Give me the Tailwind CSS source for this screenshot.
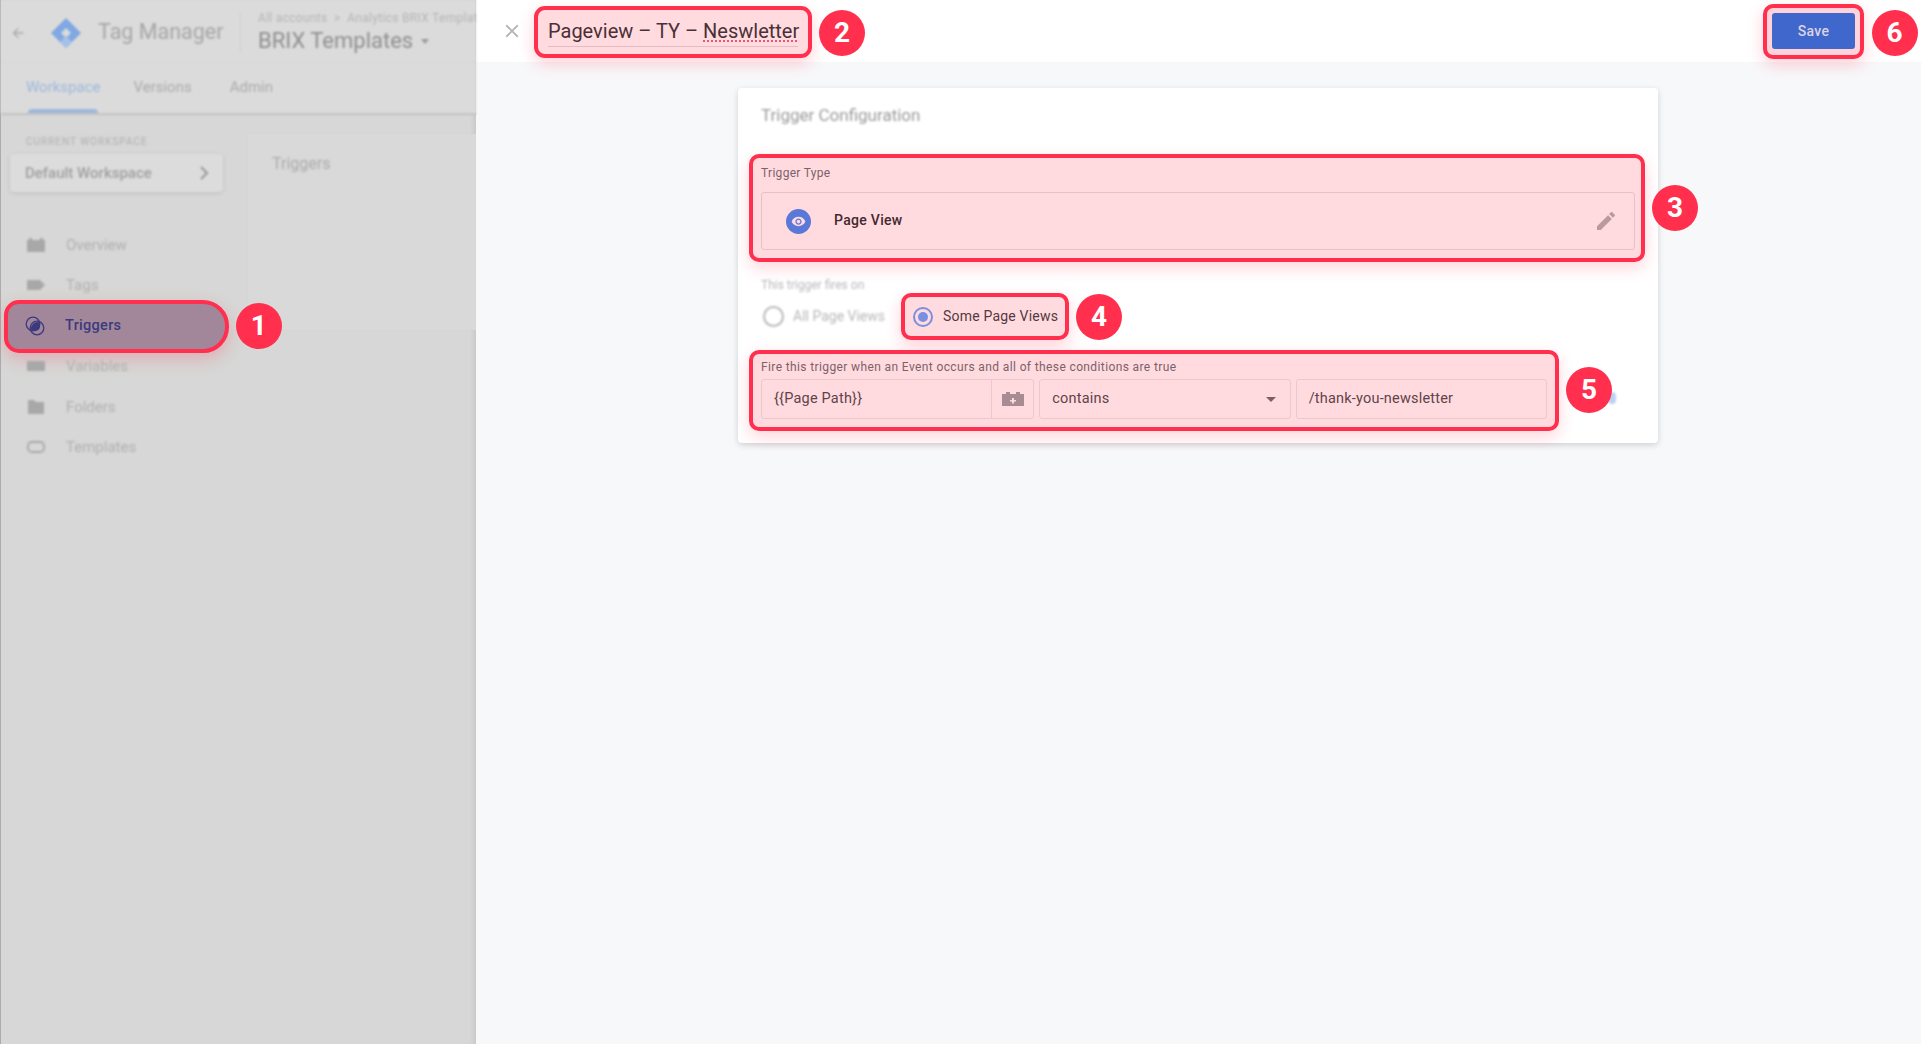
<!DOCTYPE html>
<html lang="en">
<head>
    <meta charset="UTF-8">
    <title>Trigger Configuration</title>
    <script src="https://cdn.jsdelivr.net/npm/@tailwindcss/browser@4"></script>
</head>
<body class="h-[1044px] w-[1921px] overflow-hidden bg-[#f7f8fa] font-['Roboto',sans-serif]">
<div class="flex h-full">
    <!-- Dimmed sidebar -->
    <aside class="relative flex h-full w-[476px] shrink-0 flex-col border-l border-[#ababab] bg-[#d6d7d6] shadow-[inset_-5px_0_5px_-3px_rgba(0,0,0,0.08)]">
        <!-- Top bar -->
        <div class="flex h-[62px] shrink-0 items-center overflow-hidden bg-[#dbdbdb] pt-[3px] blur-[1.2px]">
            <svg class="ml-[9px] w-[16px] shrink-0" viewBox="0 0 24 24" fill="#a9a9a9"><path d="M20 11H7.83l5.59-5.59L12 4l-8 8 8 8 1.41-1.41L7.83 13H20v-2z"/></svg>
            <svg class="ml-[24px] w-[32px] shrink-0" viewBox="0 0 32 32"><path d="M16 1 L31 16 L16 31 L1 16Z" fill="#7fa8e4"/><path d="M16 11 L21 16 L16 21 L11 16Z" fill="#dbdbdb"/><path d="M16 31 L10 25 L16 19 L22 25Z" fill="#a7c0e6"/></svg>
            <span class="ml-[16px] w-[125px] shrink-0 whitespace-nowrap text-[21.5px] text-[#a6a6a6]">Tag Manager</span>
            <div class="ml-[17px] h-[40px] w-px shrink-0 bg-[#d0d0d0]"></div>
            <div class="ml-[17px] flex shrink-0 flex-col">
                <span class="whitespace-nowrap text-[12px] leading-[14px] tracking-[0.3px] text-[#b5b5b5]">All accounts &nbsp;&gt;&nbsp; Analytics BRIX Templat</span>
                <span class="mt-[2px] flex items-center text-[22px] leading-[28px] text-[#8f8f8f]">BRIX Templates<span class="ml-[8px] mt-[2px] border-x-[4px] border-t-[5px] border-x-transparent border-t-[#9a9a9a]"></span></span>
            </div>
        </div>
        <!-- Tabs -->
        <div class="relative flex h-[53px] shrink-0 items-center gap-[34px] border-b-2 border-[#c2c3c2] bg-[#dbdbdb] pb-[1px] pl-[25px] text-[15px] text-[#ababab] blur-[1.2px]">
            <span class="text-[#9db8dd]">Workspace</span>
            <span class="ml-[-1px]">Versions</span>
            <span class="ml-[4px]">Admin</span>
            <div class="absolute bottom-0 left-[27px] h-[4px] w-[70px] rounded-t bg-[#9db8dd]"></div>
        </div>
        <div class="flex min-h-0 flex-1">
            <div class="w-[247px] shrink-0">
                <div class="ml-[25px] mt-[21px] text-[10px] leading-[12px] tracking-[1px] text-[#b0b0b0] blur-[1px]">CURRENT WORKSPACE</div>
                <div class="ml-[9px] mt-[6px] flex h-[38px] w-[213px] items-center justify-between rounded bg-[#dcdcdc] pl-[15px] pr-[13px] text-[15px] font-medium text-[#a0a0a0] shadow-[0_1px_4px_rgba(0,0,0,0.12)] blur-[1px]">
                    <span>Default Workspace</span>
                    <svg class="w-[12px]" viewBox="0 0 12 16" fill="none" stroke="#999" stroke-width="2"><path d="M3 2l6 6-6 6"/></svg>
                </div>
                <nav class="mt-[32.5px] flex flex-col text-[15px] text-[#b0b0b0]">
                    <div class="flex h-[40.5px] items-center pl-[25px] blur-[1.2px]">
                        <svg class="w-[20px]" viewBox="0 0 20 20" fill="#a8a8a8"><path d="M1 5h18v12H1zM3 3h3v2H3zM14 3h3v2h-3z"/></svg>
                        <span class="ml-[20px]">Overview</span>
                    </div>
                    <div class="flex h-[40.5px] items-center pl-[25px] blur-[1.2px]">
                        <svg class="w-[20px]" viewBox="0 0 20 20" fill="#a8a8a8"><path d="M1 5h13l5 5-5 5H1z"/></svg>
                        <span class="ml-[20px]">Tags</span>
                    </div>
                    <!-- Highlighted row -->
                    <div class="relative flex h-[40.5px] items-center pl-[24px] text-[14.5px] font-medium tracking-[0.3px] text-[#3c3a7e]">
                        <div class="absolute left-[3px] top-[-6px] h-[53px] w-[225px] rounded-l-[15px] rounded-r-[26px] border-[4px] border-[#ff2f4d] bg-[#a2879a] shadow-[0_6px_16px_rgba(255,47,77,0.25)]"></div>
                        <svg class="relative w-[20px]" viewBox="0 0 20 20" fill="none" stroke="#3c3a7e" stroke-width="1.3"><circle cx="8" cy="8" r="6.8"/><circle cx="12" cy="12" r="6.8"/><path d="M6 13.5a6.8 6.8 0 0 1 7.5-7.5a6.8 6.8 0 0 1 0.5 7.5a6.8 6.8 0 0 1-8 0z" fill="#3c3a7e" stroke="none"/></svg>
                        <span class="relative ml-[20px] mt-[1px]">Triggers</span>
                        <div class="absolute left-[235px] top-[-3px] z-10 flex h-[46px] w-[46px] items-center justify-center rounded-full bg-[#ff2f4d] text-[28px] font-bold text-white">1</div>
                    </div>
                    <div class="flex h-[40.5px] items-center pl-[25px] blur-[1.2px]">
                        <svg class="w-[20px]" viewBox="0 0 20 20" fill="#a8a8a8"><path d="M1 5h18v10H1z"/></svg>
                        <span class="ml-[20px]">Variables</span>
                    </div>
                    <div class="flex h-[40.5px] items-center pl-[25px] blur-[1.2px]">
                        <svg class="w-[20px]" viewBox="0 0 20 20" fill="#a8a8a8"><path d="M2 3h6l2 2h8v12H2z"/></svg>
                        <span class="ml-[20px]">Folders</span>
                    </div>
                    <div class="flex h-[40.5px] items-center pl-[25px] blur-[1.2px]">
                        <svg class="w-[20px]" viewBox="0 0 20 20" fill="none" stroke="#a8a8a8" stroke-width="1.8"><rect x="2" y="5" width="16" height="10" rx="4"/></svg>
                        <span class="ml-[20px]">Templates</span>
                    </div>
                </nav>
            </div>
            <div class="mt-[19px] h-[196px] flex-1 bg-[#d8d9d8] pl-[24px] pt-[18px] text-[16px] text-[#ababab] shadow-[0_0_2px_rgba(0,0,0,0.03)]">
                <span class="blur-[1.2px] inline-block">Triggers</span>
            </div>
        </div>
    </aside>

    <!-- Trigger editor -->
    <main class="flex min-w-0 flex-1 flex-col">
        <header class="flex h-[62px] shrink-0 items-center justify-between bg-white">
            <div class="flex items-center">
                <svg class="ml-[25px] w-[22px] blur-[0.6px]" viewBox="0 0 24 24" fill="#b5b5b5"><path d="M19 6.41 17.59 5 12 10.59 6.41 5 5 6.41 10.59 12 5 17.59 6.41 19 12 13.41 17.59 19 19 17.59 13.41 12z"/></svg>
                <div class="relative ml-[11px] mt-[2px] h-[52px] w-[278px] rounded-[11px] border-[4px] border-[#ff2f4d] bg-[#ffdbdf] px-[10px] pt-[8px] shadow-[0_6px_16px_rgba(255,47,77,0.22)]">
                    <div class="whitespace-nowrap border-b border-[#e3bcc4] pb-[1px] text-[20px] leading-[27px] text-[#4b2f36]">Pageview – TY – <span class="underline decoration-dotted decoration-[#e9566f] underline-offset-2">Neswletter</span></div>
                    <div class="absolute left-[281px] top-[0px] flex h-[46px] w-[46px] items-center justify-center rounded-full bg-[#ff2f4d] text-[28px] font-bold text-white">2</div>
                </div>
            </div>
            <div class="relative mr-[57px] flex h-[55px] w-[101px] items-center justify-center rounded-[10px] border-[4px] border-[#ff2f4d] bg-[#ffd3da] shadow-[0_6px_16px_rgba(255,47,77,0.22)]">
                <button class="h-[36px] w-[83px] rounded-[3px] bg-[#3f67cc] text-[14px] font-medium tracking-[0.3px] text-[#dcd3e6]">Save</button>
                <div class="absolute left-[104.5px] top-[2px] flex h-[46px] w-[46px] items-center justify-center rounded-full bg-[#ff2f4d] text-[28px] font-bold text-white">6</div>
            </div>
        </header>

        <div class="ml-[262px] mt-[26px] flex h-[355px] w-[920px] flex-col rounded-[4px] bg-white pl-[11px] shadow-[0_2px_6px_rgba(0,0,0,0.16)]">
            <div class="flex h-[66px] shrink-0 items-start pl-[12px] pt-[15px] text-[17px] text-[#9a9a9a]"><span class="blur-[1px]">Trigger Configuration</span></div>

            <!-- Trigger type -->
            <div class="relative h-[108px] w-[896px] shrink-0 rounded-[10px] border-[4px] border-[#ff2f4d] bg-[#ffdbdf] px-[8px] pt-[6px] shadow-[0_6px_16px_rgba(255,47,77,0.2)]">
                <div class="text-[12px] leading-[18px] tracking-[0.3px] text-[#7d6169]">Trigger Type</div>
                <div class="mt-[10px] flex h-[58px] w-[874px] items-center rounded-[3px] border border-[#e8c0c8] pl-[24px] pr-[16px]">
                    <div class="flex h-[25px] w-[25px] items-center justify-center rounded-full bg-[#5a78d8]">
                        <svg class="w-[15px]" viewBox="0 0 24 24" fill="#ffdbdf"><path d="M12 4.5C7 4.5 2.73 7.61 1 12c1.73 4.39 6 7.5 11 7.5s9.27-3.11 11-7.5c-1.73-4.39-6-7.5-11-7.5zM12 17c-2.76 0-5-2.24-5-5s2.24-5 5-5 5 2.24 5 5-2.24 5-5 5zm0-8c-1.66 0-3 1.34-3 3s1.34 3 3 3 3-1.34 3-3-1.34-3-3-3z"/></svg>
                    </div>
                    <span class="mb-[2px] ml-[23px] text-[14px] font-medium tracking-[0.3px] text-[#43282f]">Page View</span>
                    <svg class="ml-auto w-[24px]" viewBox="0 0 24 24" fill="#b99aa1"><path d="M3 17.25V21h3.75L17.81 9.94l-3.75-3.75L3 17.25zM20.71 7.04c.39-.39.39-1.02 0-1.41l-2.34-2.34c-.39-.39-1.02-.39-1.41 0l-1.83 1.83 3.75 3.75 1.83-1.83z"/></svg>
                </div>
                <div class="absolute left-[899px] top-[27px] flex h-[46px] w-[46px] items-center justify-center rounded-full bg-[#ff2f4d] text-[28px] font-bold text-white">3</div>
            </div>

            <!-- Fires on -->
            <div class="flex h-[88px] shrink-0 flex-col justify-start pl-[12px]">
                <div class="mt-[15px] text-[12px] leading-[16px] text-[#b8b8b8] blur-[1px]">This trigger fires on</div>
                <div class="flex items-center">
                    <div class="ml-[2px] flex items-center blur-[1px]">
                        <div class="h-[21px] w-[21px] rounded-full border-2 border-[#b8b8b8]"></div>
                        <span class="ml-[9px] w-[108px] text-[14px] text-[#b8b8b8]">All Page Views</span>
                    </div>
                    <div class="relative flex h-[47px] w-[168px] items-center rounded-[10px] border-[4px] border-[#ff2f4d] bg-[#ffdbdf] pl-[8px] shadow-[0_6px_16px_rgba(255,47,77,0.22)]">
                        <div class="flex h-[20px] w-[20px] items-center justify-center rounded-full border-2 border-[#7a8fe0]"><div class="h-[10px] w-[10px] rounded-full bg-[#7a8fe0]"></div></div>
                        <span class="ml-[10px] text-[14px] tracking-[0.2px] text-[#55383f]">Some Page Views</span>
                        <div class="absolute left-[171px] top-[-3px] flex h-[46px] w-[46px] items-center justify-center rounded-full bg-[#ff2f4d] text-[28px] font-bold text-white">4</div>
                    </div>
                </div>
            </div>

            <!-- Conditions -->
            <div class="relative h-[81px] w-[810px] shrink-0 rounded-[10px] border-[4px] border-[#ff2f4d] bg-[#ffdbdf] px-[8px] pt-[5px] shadow-[0_6px_16px_rgba(255,47,77,0.2)]">
                <div class="whitespace-nowrap text-[12px] leading-[16px] tracking-[0.38px] text-[#7d6169]">Fire this trigger when an Event occurs and all of these conditions are true</div>
                <div class="mt-[4px] flex gap-[5px] text-[14.5px] text-[#5f434a]">
                    <div class="flex h-[40px] w-[274px] items-center rounded-[3px] border border-[#eac8ce]">
                        <span class="flex-1 pl-[12px] tracking-[0.2px]">{{Page Path}}</span>
                        <div class="flex h-full w-[42px] items-center justify-center border-l border-[#eac8ce]">
                            <svg class="w-[24px]" viewBox="0 0 24 16" fill="#a88c93"><path d="M1 3h4V1h4v2h6V1h4v2h4v12H1z"/><path d="M11 7h2v2h2v1.6h-2v2h-2v-2H9V9h2z" fill="#ffdbdf"/></svg>
                        </div>
                    </div>
                    <div class="flex h-[40px] w-[252px] items-center justify-between rounded-[3px] border border-[#eac8ce] pl-[12px] pr-[14px]">
                        <span class="tracking-[0.2px]">contains</span>
                        <span class="border-x-[5px] border-t-[5px] border-x-transparent border-t-[#7c5f66]"></span>
                    </div>
                    <div class="flex h-[40px] w-[252px] items-center rounded-[3px] border border-[#eac8ce] pl-[12px]">
                        <span class="tracking-[0.2px]">/thank-you-newsletter</span>
                    </div>
                </div>
                <div class="absolute left-[855px] top-[38px] h-[12px] w-[8px] rounded-full bg-[#bcd0f5] blur-[1px]"></div>
                <div class="absolute left-[813px] top-[13px] flex h-[46px] w-[46px] items-center justify-center rounded-full bg-[#ff2f4d] text-[28px] font-bold text-white">5</div>
            </div>
        </div>
    </main>
</div>
</body>
</html>
